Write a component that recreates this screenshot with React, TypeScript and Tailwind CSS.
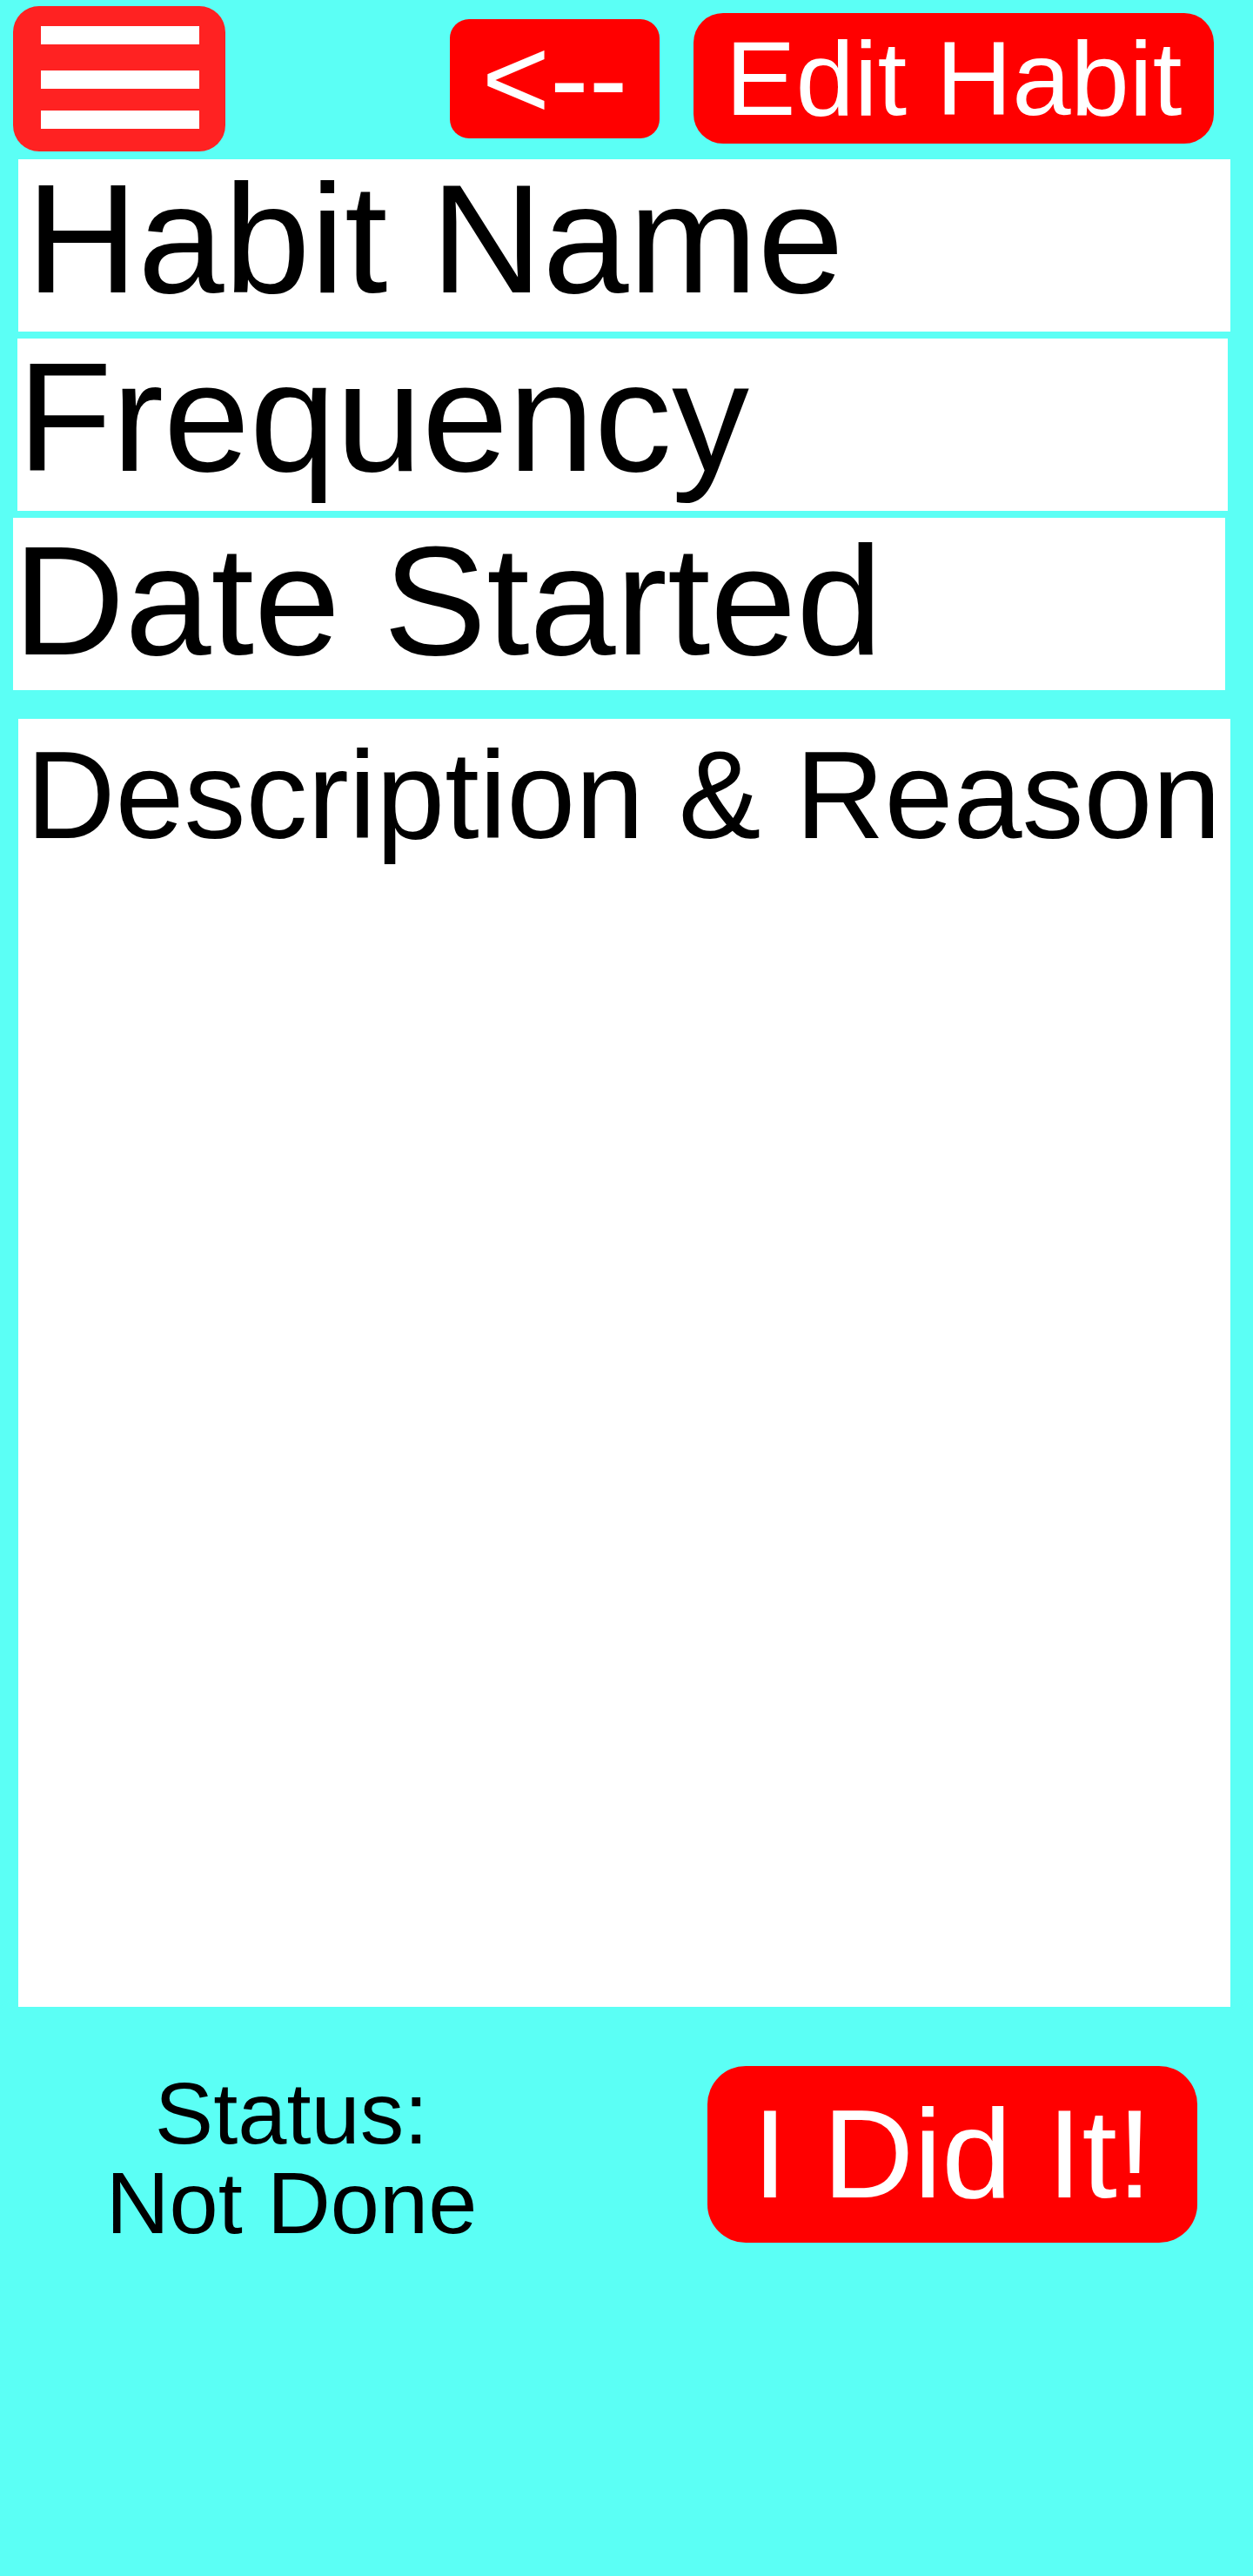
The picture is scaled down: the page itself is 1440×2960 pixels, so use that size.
const font = { fontFamily: '"Liberation Sans", Arial, sans-serif' }

const FieldBox = ({
  label,
  className,
}: {
  label: string
  className: string
}) => {
  return (
    <div
      className={`bg-white h-[198px] text-[178px] text-black whitespace-nowrap ${className}`}
    >
      {label}
    </div>
  )
}

const App = () => {
  return (
    <div className="w-[1440px] h-[2960px] bg-[#5bfff5] overflow-hidden" style={font}>
      {/* top bar */}
      <div className="flex items-center h-[180px]">
        <button className="ml-[15px] w-[244px] h-[167px] bg-[#ff2222] rounded-[30px] flex flex-col items-start pl-[32px]">
          <span className="block mt-[23px] w-[182px] h-[21px] bg-white" />
          <span className="block mt-[30px] w-[182px] h-[21px] bg-white" />
          <span className="block mt-[25px] w-[182px] h-[21px] bg-white" />
        </button>
        <div className="flex-1" />
        <button className="w-[241px] h-[137px] bg-[#ff0000] rounded-[22px] flex items-center justify-center text-white text-[134px] leading-none">
          &lt;--
        </button>
        <button className="ml-[39px] mr-[45px] w-[598px] h-[150px] bg-[#ff0000] rounded-[34px] flex items-center justify-center text-white text-[121px] leading-none whitespace-nowrap">
          Edit Habit
        </button>
      </div>

      {/* fields */}
      <div className="mt-[3px] flex flex-col gap-[8px]">
        <FieldBox label="Habit Name" className="ml-[21px] w-[1393px] pl-[9px] leading-[184px]" />
        <FieldBox label="Frequency" className="ml-[20px] w-[1391px] leading-[181px]" />
        <FieldBox label="Date Started" className="ml-[15px] w-[1393px] leading-[191px]" />
      </div>

      {/* description */}
      <div className="mt-[33px] ml-[21px] w-[1393px] h-[1480px] bg-white pl-[9px] pt-[8px] text-[142px] leading-[159px] text-black whitespace-nowrap">
        Description &amp; Reason
      </div>

      {/* status row */}
      <div className="mt-[68px] flex items-start">
        <div className="mt-[3px] w-[670px] text-center text-black text-[101px] leading-[103px]">
          <p>Status:</p>
          <p>Not Done</p>
        </div>
        <button className="ml-[143px] w-[563px] h-[203px] bg-[#ff0000] rounded-[44px] flex items-center justify-center text-white text-[145px] leading-none whitespace-nowrap">
          I Did It!
        </button>
      </div>
    </div>
  )
}

export default App
